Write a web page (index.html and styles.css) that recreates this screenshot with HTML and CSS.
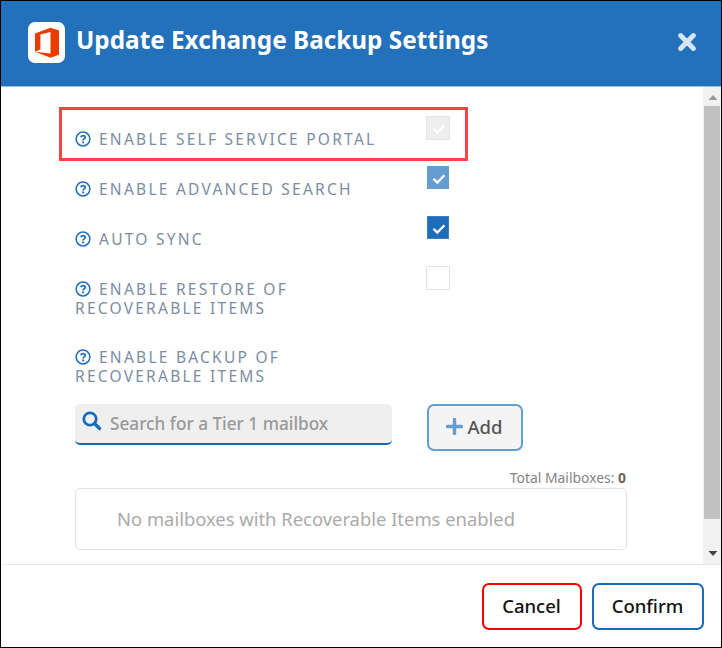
FILE: index.html
```html
<!DOCTYPE html>
<html lang="en">
<head>
<meta charset="utf-8">
<title>Update Exchange Backup Settings</title>
<link rel="stylesheet" href="styles.css">
</head>
<body>
<svg width="0" height="0" class="defs" aria-hidden="true">
  <symbol id="help" viewBox="0 0 16 16">
    <circle cx="8" cy="8" r="6.9" fill="none" stroke="currentColor" stroke-width="1.5"/>
    <path d="M5.7 6.2C6.2 5.1 7 4.7 8 4.7C9.300 4.700 10.200 5.400 10.200 6.400C10.200 7.900 8.100 7.900 8.100 9.500" fill="none" stroke="currentColor" stroke-width="1.700"/>
    <path d="M7.100 10.500h1.900v1.800h-1.900z" fill="currentColor"/>
  </symbol>
  <symbol id="check" viewBox="0 0 14 12">
    <path d="M1.500 5.800 5.300 9.600 12.400 2.300" fill="none" stroke="currentColor" stroke-width="2.300"/>
  </symbol>
</svg>
<section class="modal">
  <header class="header">
    <span class="logo">
      <svg width="26" height="32" viewBox="0 0 26 32"><path d="M1 6.500 16.500.8 25 3.400V27.800L16.500 30.800 1 24.800 16.500 26.600V5L6.400 7.600V22.400L1 24.800Z" fill="#eb3c00"/></svg>
    </span>
    <h1 class="title">Update Exchange Backup Settings</h1>
    <svg class="close" width="20" height="20" viewBox="0 0 20 20"><path d="M3.600 3.600 16.400 16.400M16.400 3.600 3.600 16.400" stroke="currentColor" stroke-width="5" stroke-linecap="round"/></svg>
  </header>
  <div class="body">
    <main class="content">
      <div class="row">
        <div class="label"><svg class="help"><use href="#help"/></svg>Enable Self Service Portal</div>
        <span class="box locked"><svg><use href="#check"/></svg></span>
        <div class="highlight"></div>
      </div>
      <div class="row">
        <div class="label"><svg class="help"><use href="#help"/></svg>Enable Advanced Search</div>
        <span class="box on dim"><svg><use href="#check"/></svg></span>
      </div>
      <div class="row">
        <div class="label"><svg class="help"><use href="#help"/></svg>Auto Sync</div>
        <span class="box on"><svg><use href="#check"/></svg></span>
      </div>
      <div class="row tall">
        <div class="label"><svg class="help"><use href="#help"/></svg>Enable Restore of<br>Recoverable Items</div>
        <span class="box"></span>
      </div>
      <div class="row tall">
        <div class="label"><svg class="help"><use href="#help"/></svg>Enable Backup of<br>Recoverable Items</div>
      </div>
      <div class="tools">
        <div class="search">
          <svg width="20" height="20" viewBox="0 0 20 20"><circle cx="8" cy="8" r="6.200" fill="none" stroke="currentColor" stroke-width="2.800"/><path d="M12.500 12.500 17.500 17.500" stroke="currentColor" stroke-width="3.400" stroke-linecap="round"/></svg>
          <span>Search for a Tier 1 mailbox</span>
        </div>
        <div class="btn add">
          <svg width="17" height="17" viewBox="0 0 17 17"><path d="M8.500 1.500v14M1.500 8.500h14" stroke="currentColor" stroke-width="3.400" stroke-linecap="round"/></svg>
          <span>Add</span>
        </div>
      </div>
      <div class="total"><span>Total Mailboxes: <b>0</b></span></div>
      <div class="empty"><span>No mailboxes with Recoverable Items enabled</span></div>
    </main>
    <div class="scrollbar">
      <svg width="17" height="19" viewBox="0 0 17 19"><path d="M4.500 13 9 8 13.500 13Z" fill="#9b9b9b"/></svg>
      <div class="thumb"></div>
      <svg width="17" height="19" viewBox="0 0 17 19"><path d="M4.500 6 9 11 13.500 6Z" fill="#444"/></svg>
    </div>
  </div>
  <footer class="footer">
    <div class="btn cancel"><span>Cancel</span></div>
    <div class="btn confirm"><span>Confirm</span></div>
  </footer>
</section>
</body>
</html>
```

FILE: styles.css
```css
* { box-sizing: border-box; }
body { margin: 0; font-family: "Noto Sans", sans-serif; background: #fff; }
svg { display: block; flex: none; }
.defs { position: absolute; }
.modal { width: 722px; height: 648px; border: 1px solid #000; display: flex; flex-direction: column; overflow: hidden; }
.header { height: 86px; flex: none; display: flex; align-items: flex-start; background: #2371ba; border-bottom: 1px solid #9cc0e0; padding: 21px 24px 0 27px; }
.logo { width: 37px; height: 41px; background: #fff; border-radius: 7px; display: flex; align-items: center; justify-content: center; }
.title { margin: 0 0 0 11px; color: #fff; font-size: 24.3px; line-height: 36px; font-weight: 700; white-space: nowrap; }
.close { margin: 10px 0 0 auto; color: #d7e5f3; }
.body { height: 477px; flex: none; display: flex; justify-content: space-between; }
.content { width: 552px; margin-left: 74px; padding-top: 29px; }
.row { display: grid; grid-template-columns: 351px 24px; height: 50px; align-items: start; position: relative; }
.row.tall { height: 69px; }
.row.tall + .row.tall { margin-top: -1px; }
.label { padding-top: 14px; color: #7b8da1; font-size: 15.5px; line-height: 19px; letter-spacing: 2.25px; text-transform: uppercase; white-space: nowrap; }
.help { display: inline-block; width: 16px; height: 16px; margin-right: 8px; vertical-align: -2px; color: #2371ba; }
.box { width: 24px; height: 24px; border: 1px solid #e5e5e5; background: #fff; color: #fff; }
.box svg { width: 14px; height: 12px; margin: 6px 0 0 5px; }
.box.locked { background: #eee; }
.box.on { width: 22px; height: 23px; margin-left: 1px; background: #1f6db8; border-color: #3c7fbf; }
.box.on svg { margin-left: 4px; }
.box.on.dim { background: #659dd1; border-color: #659dd1; }
.highlight { position: absolute; left: -16px; top: -9px; width: 409px; height: 54px; border: 3px solid #fa4345; }
.tools { display: flex; align-items: flex-start; gap: 35px; height: 64px; margin-top: 1px; }
.search { width: 317px; height: 41px; display: flex; align-items: flex-start; background: #efefef; border-bottom: 2px solid #1269b9; border-radius: 5px; padding: 8px 0 0 7px; color: #176cb9; }
.search svg { margin-top: -1px; }
.search span { margin-left: 8px; color: #999; font-size: 17.2px; line-height: 24px; font-weight: 500; white-space: nowrap; }
.btn { height: 47px; display: flex; align-items: center; justify-content: center; border: 2px solid #176cb9; border-radius: 7px; font-size: 18.5px; font-weight: 500; color: #111; background: #fff; padding: 0 1px 2px 0; }
.add { width: 96px; border-color: #659dd1; color: #659dd1; background: #f4f4f4; gap: 4px; }
.add span { color: #555; }
.total { height: 20px; text-align: right; font-size: 13.9px; line-height: 20px; color: #858585; white-space: nowrap; padding-right: 1px; }
.total b { color: #666; }
.empty { height: 62px; border: 1px solid #e3e3e3; border-radius: 5px; padding: 0 0 2px 41px; display: flex; align-items: center; color: #aaa; font-size: 18.4px; white-space: nowrap; }
.scrollbar { width: 18px; background: #f1f1f1; display: flex; flex-direction: column; align-items: center; }
.thumb { width: 16px; height: 413px; background: #c1c1c1; }
.scrollbar svg:last-child { margin-top: 26px; }
.footer { flex: 1; border-top: 1px solid #e8e8e8; display: flex; justify-content: flex-end; gap: 10px; padding: 18px 17px 0 0; }
.cancel { width: 100px; border-color: #f00; }
.confirm { width: 112px; }
```
